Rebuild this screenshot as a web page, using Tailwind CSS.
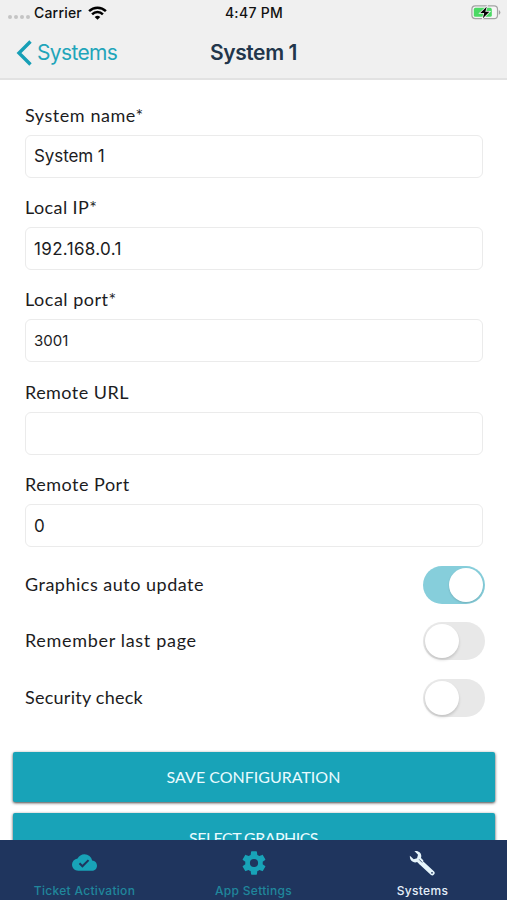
<!DOCTYPE html>
<html lang="en">
<head>
<meta charset="utf-8">
<title>System 1</title>
<script src="https://cdn.jsdelivr.net/npm/@tailwindcss/browser@4"></script>
</head>
<body class="bg-white">
<div class="w-[507px] h-[900px] flex flex-col overflow-hidden bg-white font-[Inter,sans-serif] text-[#1c1c1e]">
  <header class="h-[80px] shrink-0 bg-[#f0f0f0] border-b-2 border-[#e2e2e2]">
    <div class="h-[26px] grid grid-cols-3 items-center pl-[8px] pr-[6px] text-[14px] font-medium text-[#111]">
      <div class="flex items-center">
        <div class="flex gap-[2px] mr-[4px] pt-[8px]">
          <i class="size-[4px] rounded-full bg-[#c4c4c4]"></i><i class="size-[4px] rounded-full bg-[#c4c4c4]"></i><i class="size-[4px] rounded-full bg-[#c4c4c4]"></i><i class="size-[4px] rounded-full bg-[#c4c4c4]"></i>
        </div>
        <span class="tracking-[0.2px] -mt-px">Carrier</span>
        <svg class="ml-[6px] w-[19px] h-[14px]" viewBox="0 0 19 14" fill="none" stroke="#000" stroke-width="2.5"><path d="M1.1 5.1a12 12 0 0 1 16.8 0M4.1 8.3a7.7 7.7 0 0 1 10.8 0"/><path d="M9.5 13.8L6.7 11a4 4 0 0 1 5.6 0z" fill="#000" stroke="none"/></svg>
      </div>
      <div class="text-center whitespace-nowrap tracking-[0.3px] -mt-px -ml-px">4:47 PM</div>
      <div class="flex justify-end">
        <svg class="w-[30px] h-[15px] -mt-px" viewBox="0 0 30 15"><rect x=".9" y=".9" width="25.6" height="12.8" rx="3.4" fill="#f5f5f5" stroke="#a3a3a3" stroke-width="1.2"/><rect x="2.8" y="2.8" width="18" height="9" rx="1.6" fill="#4bd964"/><path d="M27.8 5v4.8q1.6-.6 1.6-2.4T27.8 5z" fill="#a3a3a3"/><path d="M15.7 1.8L9.3 8h3.9l-1.300 5.200L18.300 6.800h-4z" fill="#000" stroke="#f0f0f0" stroke-width="1.6" paint-order="stroke"/></svg>
      </div>
    </div>
    <div class="h-[53px] grid grid-cols-3 items-center px-[16px]">
      <div class="flex items-center text-[#1fa5ba] text-[21px]">
        <svg class="w-[17px] h-[26px] mr-[4px]" viewBox="0 0 17 26" fill="none" stroke="#179fb6" stroke-width="3.4"><path d="M14.5 1.5L3 13l11.500 11.500"/></svg>
        <span class="tracking-[-0.65px]">Systems</span>
      </div>
      <h1 class="text-center text-[21px] font-semibold text-[#22364b] tracking-[-0.4px] whitespace-nowrap">System 1</h1>
    </div>
  </header>

  <main class="flex-1 min-h-0 overflow-hidden flex flex-col">
    <section class="px-[25px] pt-[22.5px] font-[Lato,sans-serif] text-[18px]">
      <div class="h-[92.4px] w-[458px]"><label class="block h-[32px] leading-[25px] tracking-[0.55px]">System name*</label><div class="h-[43px] border border-[#ebebeb] rounded-[6px] px-[8px] pt-[2px] flex items-center font-[Inter,sans-serif] text-[17px] tracking-[-0.1px]">System 1</div></div>
      <div class="h-[92.4px] w-[458px]"><label class="block h-[32px] leading-[25px] tracking-[0.4px]">Local IP*</label><div class="h-[43px] border border-[#ebebeb] rounded-[6px] px-[8px] pt-[2px] flex items-center font-[Inter,sans-serif] text-[17px] tracking-[0.35px]">192.168.0.1</div></div>
      <div class="h-[92.4px] w-[458px]"><label class="block h-[32px] leading-[25px] tracking-[0.5px]">Local port*</label><div class="h-[43px] border border-[#ebebeb] rounded-[6px] px-[8px] flex items-center font-[Inter,sans-serif] text-[15px] tracking-[0px]">3001</div></div>
      <div class="h-[92.4px] w-[458px]"><label class="block h-[32px] leading-[25px] tracking-[0.45px]">Remote URL</label><div class="h-[43px] border border-[#ebebeb] rounded-[6px]"></div></div>
      <div class="h-[94px] w-[458px]"><label class="block h-[32px] leading-[25px] tracking-[0.5px]">Remote Port</label><div class="h-[43px] border border-[#ebebeb] rounded-[6px] px-[8px] pt-[2px] flex items-center font-[Inter,sans-serif] text-[17px] tracking-[-0.3px]">0</div></div>
    </section>
    <section class="pl-[25px] pr-[22px] font-[Lato,sans-serif] text-[18px]">
      <div class="h-[56.3px] flex items-start justify-between"><span class="leading-[37px] tracking-[0.5px]">Graphics auto update</span><span class="w-[62px] h-[38px] rounded-full bg-[#86cedb] p-[2px] flex justify-end"><i class="size-[34px] rounded-full bg-white shadow-[0_1px_2px_rgba(0,0,0,0.15)]"></i></span></div>
      <div class="h-[56.3px] flex items-start justify-between"><span class="leading-[37px] tracking-[0.68px]">Remember last page</span><span class="w-[62px] h-[38px] rounded-full bg-[#e8e8e8] p-[2px] flex"><i class="size-[34px] rounded-full bg-white shadow-[0_2px_3px_rgba(0,0,0,0.16)]"></i></span></div>
      <div class="h-[56.3px] flex items-start justify-between"><span class="leading-[37px] tracking-[0.25px]">Security check</span><span class="w-[62px] h-[38px] rounded-full bg-[#e8e8e8] p-[2px] flex"><i class="size-[34px] rounded-full bg-white shadow-[0_2px_3px_rgba(0,0,0,0.16)]"></i></span></div>
    </section>
    <section class="mt-[17.5px] px-[12.5px] flex flex-col gap-[11px] font-[Lato,sans-serif] text-[16px] text-[#e9fbff]">
      <button class="h-[50px] shrink-0 rounded-[2px] bg-[#18a3b8] shadow-[0_1px_3px_rgba(0,0,0,0.75)]">SAVE CONFIGURATION</button>
      <button class="h-[50px] shrink-0 rounded-[2px] bg-[#18a3b8] shadow-[0_1px_3px_rgba(0,0,0,0.75)] tracking-[-0.55px]">SELECT GRAPHICS</button>
    </section>
  </main>

  <nav class="relative h-[60px] shrink-0 bg-[#1f355e] grid grid-cols-3 text-[12px] font-medium tracking-[0.3px] text-[#20879c]">
    <div class="flex flex-col items-center">
      <svg class="mt-[10px] size-[25px]" viewBox="0 0 24 24" fill="#18a3b8"><path d="M19.35 10.04A7.49 7.49 0 0 0 12 4C9.11 4 6.6 5.64 5.35 8.04A5.994 5.994 0 0 0 0 14c0 3.31 2.69 6 6 6h13c2.76 0 5-2.24 5-5 0-2.64-2.05-4.78-4.65-4.96zM10 17l-3.5-3.5 1.41-1.41L10 14.17 15.18 9l1.41 1.41L10 17z"/></svg>
      <span class="mt-[7px] leading-[18px]">Ticket Activation</span>
    </div>
    <div class="flex flex-col items-center">
      <svg class="mt-[9px] size-[28px]" viewBox="0 0 24 24" fill="#18a3b8"><path d="M19.43 12.98c.04-.32.07-.64.07-.98s-.03-.66-.07-.98l2.11-1.65c.19-.15.24-.42.12-.64l-2-3.46c-.12-.22-.39-.3-.61-.22l-2.49 1c-.52-.4-1.08-.73-1.69-.98l-.38-2.65A.488.488 0 0 0 14 2h-4c-.25 0-.46.18-.49.42l-.38 2.65c-.61.25-1.17.59-1.69.98l-2.49-1c-.23-.09-.49 0-.61.22l-2 3.46c-.13.22-.07.49.12.64l2.11 1.65c-.04.32-.07.65-.07.98s.03.66.07.98l-2.11 1.65c-.19.15-.24.42-.12.64l2 3.46c.12.22.39.3.61.22l2.49-1c.52.4 1.08.73 1.69.98l.38 2.65c.03.24.24.42.49.42h4c.25 0 .46-.18.49-.42l.38-2.65c.61-.25 1.17-.59 1.69-.98l2.49 1c.23.09.49 0 .61-.22l2-3.46c.12-.22.07-.49-.12-.64l-2.11-1.65zM12 15.5a3.500 3.500 0 1 1 0-7 3.500 3.500 0 0 1 0 7z"/></svg>
      <span class="mt-[5px] leading-[18px]">App Settings</span>
    </div>
    <div class="flex flex-col items-center text-[#e4effa]">
      <svg class="mt-[10px] mr-[1px] size-[26px]" viewBox="0 0 26 26"><path d="M12.500 13L23.300 23" stroke="#e6f5fb" stroke-width="4.600" stroke-linecap="round"/><path d="M.9 5.800L4.700 9.200l3.300-1 1-3.500L5.400 1.100C9.200.2 12.500 2.800 12.300 6.300l-.3 1.800 2.500 2.500-3.900 3.900-2.500-2.400C4.200 13.500.3 10.200.9 5.800z" fill="#e6f5fb"/><path d="M10.200 9.400l3 3.100" stroke="#1f355e" stroke-width=".8"/><circle cx="23" cy="22.800" r=".9" fill="#1f355e"/></svg>
      <span class="mt-[6px] leading-[18px]">Systems</span>
    </div>
  </nav>
</div>
</body>
</html>
